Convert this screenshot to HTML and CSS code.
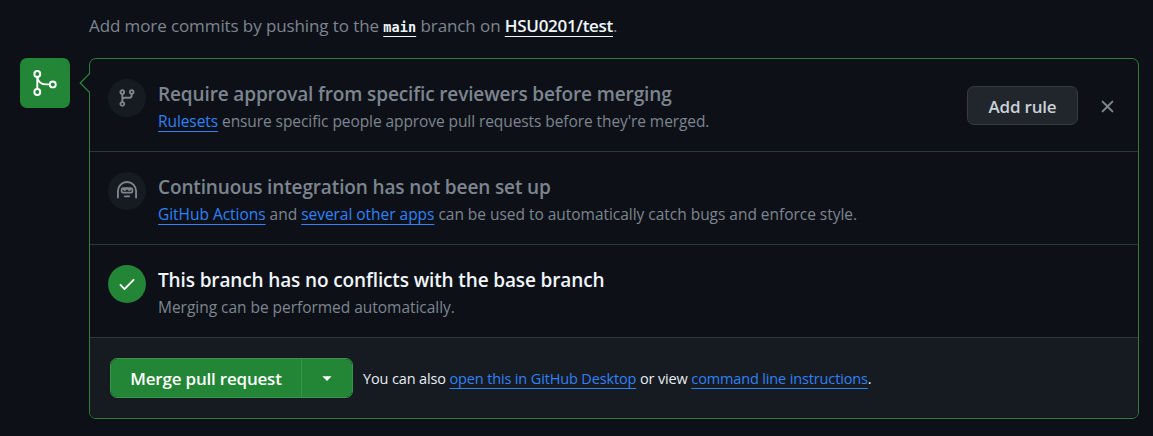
FILE: index.html
```html
<!DOCTYPE html>
<html lang="en">
<head>
<meta charset="utf-8">
<title>Merge pull request</title>
<link rel="stylesheet" href="styles.css">
</head>
<body>
<main class="page">
  <p class="hint">Add more commits by pushing to the <a class="branch" href="#">main</a> branch on <a class="repo" href="#">HSU0201/test</a>.</p>
  <div class="merge">
    <div class="badge">
      <svg width="30" height="30" viewBox="0 0 30 30" fill="none" stroke="#fff" stroke-width="1.9"><circle cx="7.3" cy="6" r="2.95"/><circle cx="7.3" cy="24" r="2.95"/><circle cx="22.8" cy="16.4" r="2.95"/><path d="M7.3 9v12M7.3 9c.8 4.600 4.300 7.400 8.500 7.400h4"/></svg>
    </div>
    <section class="card">
      <svg class="pointer" width="11" height="20" viewBox="0 0 11 20"><path class="pointer-fill" d="M11 1 1.500 10 11 19Z"/><path class="pointer-line" d="M10.500 .7 1.200 10 10.500 19.300"/></svg>
      <div class="row">
        <span class="status"><svg width="20" height="20" viewBox="0 0 16 16"><path d="M9.500 3.250a2.250 2.250 0 1 1 3 2.122V6A2.500 2.500 0 0 1 10 8.500H6a1 1 0 0 0-1 1v1.128a2.251 2.251 0 1 1-1.500 0V5.372a2.250 2.250 0 1 1 1.500 0v1.836A2.493 2.493 0 0 1 6 7h4a1 1 0 0 0 1-1v-.628A2.250 2.250 0 0 1 9.500 3.250Zm-6 0a.75.75 0 1 0 1.500 0 .75.75 0 0 0-1.500 0Zm8.250-.75a.75.75 0 1 0 0 1.500.75.75 0 0 0 0-1.500ZM4.250 12a.75.75 0 1 0 0 1.500.75.75 0 0 0 0-1.500Z"/></svg></span>
        <div class="info">
          <h3 class="title">Require approval from specific reviewers before merging</h3>
          <p class="desc tight"><a href="#">Rulesets</a> ensure specific people approve pull requests before they're merged.</p>
        </div>
        <button class="rule">Add rule</button>
        <button class="close" aria-label="Dismiss"><svg width="21" height="21" viewBox="0 0 16 16"><path d="M3.720 3.720a.75.75 0 0 1 1.060 0L8 6.940l3.220-3.220a.75.75 0 0 1 1.060 1.060L9.060 8l3.220 3.220a.75.75 0 0 1-1.060 1.060L8 9.060l-3.220 3.220a.75.75 0 0 1-1.060-1.060L6.940 8 3.720 4.780a.75.75 0 0 1 0-1.060Z"/></svg></button>
      </div>
      <div class="row">
        <span class="status"><svg width="20" height="20" viewBox="0 0 16 16"><path fill-rule="evenodd" d="M0 8a8 8 0 1 1 16 0v5.250a.75.75 0 0 1-1.500 0V8a6.500 6.500 0 1 0-13 0v5.250a.75.75 0 0 1-1.500 0ZM5.500 12.250a.75.75 0 0 1 .75-.75h3.500a.75.75 0 0 1 0 1.500h-3.500a.75.75 0 0 1-.75-.75ZM3 6.750C3 5.784 3.784 5 4.750 5h6.500C12.216 5 13 5.784 13 6.750v1.500A1.750 1.750 0 0 1 11.250 10h-6.500A1.750 1.750 0 0 1 3 8.250ZM4.400 6.600v1.600c0 .2.15.350.350.350h6.500c.2 0 .350-.15.350-.350v-1.600c0-.15-.2-.2-.350-.2h-6.500c-.15 0-.350.05-.350.2Z"/><path class="visor" d="m4.300 5.900 1.900 1.500L8 5.900l1.800 1.500L11.700 5.900"/></svg></span>
        <div class="info">
          <h3 class="title">Continuous integration has not been set up</h3>
          <p class="desc"><a href="#">GitHub Actions</a> and <a href="#">several other apps</a> can be used to automatically catch bugs and enforce style.</p>
        </div>
      </div>
      <div class="row">
        <span class="status ok"><svg width="20" height="20" viewBox="0 0 16 16"><path d="M13.780 4.220a.75.75 0 0 1 0 1.060l-7.250 7.250a.75.75 0 0 1-1.060 0L2.220 9.280a.751.751 0 0 1 .018-1.042.751.751 0 0 1 1.042-.018L6 10.940l6.720-6.720a.75.75 0 0 1 1.060 0Z"/></svg></span>
        <div class="info">
          <h3 class="title strong">This branch has no conflicts with the base branch</h3>
          <p class="desc">Merging can be performed automatically.</p>
        </div>
      </div>
      <footer class="actions">
        <div class="group">
          <button class="primary">Merge pull request</button>
          <button class="primary more" aria-label="Select merge method"><svg width="10" height="6" viewBox="0 0 10 6"><path d="M.4.300h9.200L5 5.100Z"/></svg></button>
        </div>
        <p class="also">You can also <a href="#">open this in GitHub Desktop</a> or view <a href="#">command line instructions</a>.</p>
      </footer>
    </section>
  </div>
</main>
</body>
</html>
```
FILE: styles.css
```css
* { box-sizing: border-box; }
body { margin: 0; background: #0d1117; color: #e6edf3; font-family: "Segoe UI", "Open Sans", "Noto Sans", sans-serif; }
.page { width: 1153px; height: 436px; padding: 14px 14px 0 20px; overflow: hidden; }
p, h3 { margin: 0; white-space: nowrap; }
a { text-decoration: underline 1px; text-underline-offset: 4px; text-decoration-skip-ink: none; }
button { font: inherit; padding: 0; cursor: pointer; }
svg { display: block; fill: currentColor; }
.hint { height: 44px; padding-left: 69px; font-size: 17px; line-height: 24px; color: #7d8590; letter-spacing: -0.1px; }
.hint a { color: #f0f6fc; font-weight: 600; }
.hint .branch { font-family: "DejaVu Sans Mono", monospace; font-weight: 700; font-size: 13.5px; letter-spacing: 0.1px; }
.hint .repo { letter-spacing: -0.3px; }
.merge { display: flex; gap: 19px; align-items: flex-start; }
.badge { width: 50px; height: 50px; border-radius: 7px; background: #238636; display: grid; place-items: center; }
.badge svg { fill: none; }
.card { position: relative; width: 1050px; height: 361px; border: 1px solid #2d7d3c; border-radius: 7px; }
.pointer { position: absolute; left: -11px; top: 14px; }
.pointer-fill { fill: #0d1117; }
.pointer-line { fill: none; stroke: #2d8a3e; stroke-width: 1.2; }
.row { height: 93px; padding: 20px 20px 0 18px; display: flex; align-items: flex-start; border-bottom: 1px solid #30363d; }
.status { width: 38px; height: 38px; border-radius: 50%; background: #161b22; color: #7d8590; display: grid; place-items: center; flex: none; }
.status.ok { background: #238636; color: #fff; }
.visor { fill: none; stroke: currentColor; stroke-width: 1.3; }
.info { flex: 1; padding-left: 12px; }
.title { margin-top: 1px; font-size: 19px; line-height: 28px; font-weight: 600; color: #7d8590; letter-spacing: -0.13px; }
.title.strong { color: #f0f6fc; }
.desc { font-size: 15.5px; line-height: 22px; padding-top: 2px; color: #7d8590; letter-spacing: -0.03px; }
.desc.tight { letter-spacing: -0.08px; }
.desc a, .also a { color: #2f81f7; }
.rule { width: 111px; height: 39px; margin-top: 7px; padding-top: 1px; border: 1px solid #363b42; border-radius: 7px; background: #21262d; color: #c9d1d9; font-size: 17px; font-weight: 600; letter-spacing: -0.2px; }
.close { width: 21px; height: 21px; margin: 17px 0 0 19px; border: 0; background: none; color: #7d8590; }
.actions { height: 80px; padding-left: 20px; background: #161b22; border-radius: 0 0 6px 6px; display: flex; align-items: center; gap: 10px; }
.group { display: flex; width: 243px; height: 40px; border: 1px solid #39934a; border-radius: 7px; overflow: hidden; }
.primary { flex: 1; padding-top: 1px; border: 0; background: #238636; color: #fff; font-size: 17px; font-weight: 600; letter-spacing: -0.2px; }
.more { flex: 0 0 51px; display: grid; place-items: center; border-left: 1px solid #39934a; }
.also { padding-top: 2px; font-size: 14.5px; line-height: 20px; color: #e6edf3; letter-spacing: -0.14px; }
```
